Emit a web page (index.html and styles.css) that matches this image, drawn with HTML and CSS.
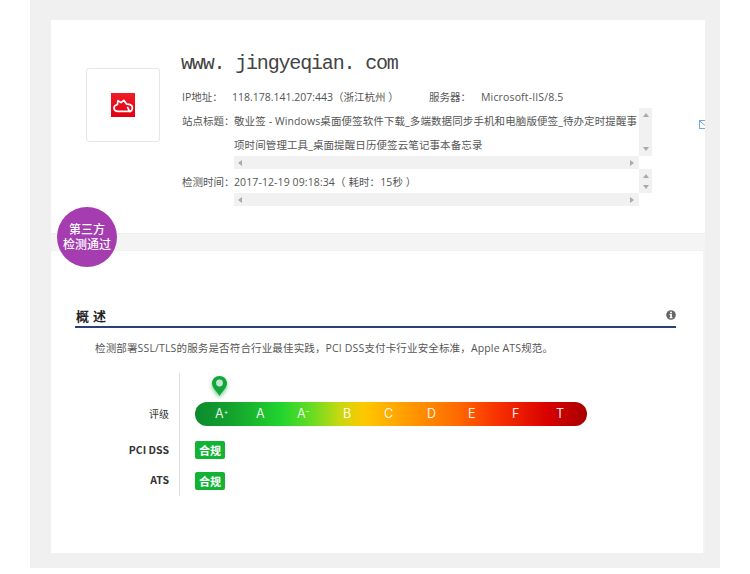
FILE: index.html
```html
<!DOCTYPE html>
<html lang="zh-CN">
<head>
    <meta charset="UTF-8">
    <meta name="viewport" content="width=device-width, initial-scale=1.0">
    <title>www.jingyeqian.com 检测报告</title>
    <link rel="stylesheet" href="styles.css">
</head>
<body>
    <div class="report">
        <div class="report-inner">
            <div class="site-card">
                <div class="site-logo">
                    <svg class="logo-mark" width="24" height="24" viewBox="0 0 24 24">
                        <path d="M7 18.3C4.6 18.3 3 16.8 3 15C3 13.2 4.4 12 6.4 11.5L7 7.6L10 9.6L12.8 7.4L15.8 11.2C19 11.2 21.4 12.6 21.4 15C21.4 16.8 20.4 18 18.8 18.6L16.3 13.8M7 18.3H18.8" fill="none" stroke="#fff" stroke-width="1.7" stroke-linejoin="round"/>
                    </svg>
                </div>
                <div class="site-info">
                    <h1 class="site-name">www. jingyeqian. com</h1>
                    <div class="ip-row">
                        <span class="ip-label">IP地址：</span>
                        <span class="ip-value">118.178.141.207:443（浙江杭州 ）</span>
                        <span class="server-label">服务器：</span>
                        <span class="server-value">Microsoft-IIS/8.5</span>
                    </div>
                    <div class="info-row">
                        <span class="info-label">站点标题：</span>
                        <div class="scrollbox">
                            <div class="scroll-text tall">
                                <div class="scroll-line">敬业签 - Windows桌面便签软件下载_多端数据同步手机和电脑版便签_待办定时提醒事</div>
                                <div class="scroll-line">项时间管理工具_桌面提醒日历便签云笔记事本备忘录</div>
                            </div>
                            <div class="scroll-v"><i class="arrow-up"></i><i class="arrow-down"></i></div>
                            <div class="scroll-h"><i class="arrow-left"></i><i class="arrow-right"></i></div>
                        </div>
                    </div>
                    <div class="info-row">
                        <span class="info-label">检测时间：</span>
                        <div class="scrollbox">
                            <div class="scroll-text">
                                <div class="scroll-line">2017-12-19 09:18:34（ 耗时：15秒 ）</div>
                            </div>
                            <div class="scroll-v short"><i class="arrow-up"></i><i class="arrow-down"></i></div>
                            <div class="scroll-h"><i class="arrow-left"></i><i class="arrow-right"></i></div>
                        </div>
                    </div>
                </div>
                <svg class="mail-icon" width="11" height="9" viewBox="0 0 11 9">
                    <rect x="0.5" y="0.5" width="10" height="8" fill="none" stroke="#6ea8dc"/>
                    <path d="M0.5 1L5.5 5L10.5 1" fill="none" stroke="#6ea8dc"/>
                </svg>
            </div>

            <div class="stamp">第三方<br>检测通过</div>

            <div class="divider"></div>

            <div class="summary-card">
                <div class="section-head">
                    <h2>概 述</h2>
                    <svg width="10" height="10" viewBox="0 0 10 10">
                        <circle cx="5" cy="5" r="4.8" fill="#666"/>
                        <rect x="4.1" y="1.7" width="1.8" height="1.6" fill="#fff"/>
                        <path d="M3.5 4H5.9V7.2H6.6V8.2H3.5V7.2H4.2V5H3.5Z" fill="#fff"/>
                    </svg>
                </div>
                <p class="summary-text">检测部署SSL/TLS的服务是否符合行业最佳实践，PCI DSS支付卡行业安全标准，Apple ATS规范。</p>

                <div class="rating-table">
                    <div class="rating-label grade-label">评级</div>
                    <div class="rating-cell grade-cell">
                        <svg class="pin" width="15" height="20" viewBox="0 0 15 20">
                            <path d="M7.5 0C3.4 0 0 3.2 0 7.3C0 12 5 15.5 7.5 20C10 15.5 15 12 15 7.3C15 3.2 11.6 0 7.5 0Z" fill="#12a53c"/>
                            <circle cx="7.5" cy="7" r="3.4" fill="#c6e6cf"/>
                        </svg>
                        <div class="grade-bar">
                            <span>A<sup>+</sup></span>
                            <span>A</span>
                            <span>A<sup>–</sup></span>
                            <span>B</span>
                            <span>C</span>
                            <span>D</span>
                            <span>E</span>
                            <span>F</span>
                            <span>T</span>
                        </div>
                    </div>
                    <div class="rating-label bold">PCI DSS</div>
                    <div class="rating-cell badge-cell"><span class="badge">合规</span></div>
                    <div class="rating-label bold">ATS</div>
                    <div class="rating-cell badge-cell last"><span class="badge">合规</span></div>
                </div>
            </div>
        </div>
    </div>
</body>
</html>
```

FILE: styles.css
```css
body {
    margin: 0;
    padding: 0;
    background-color: #fff;
    font-family: "Open Sans", "Noto Sans CJK SC", sans-serif;
    font-size: 10.5px;
    color: #555;
}
.report {
    width: 690px;
    height: 568px;
    margin-left: 30px;
    padding: 20px 0 15px 21px;
    box-sizing: border-box;
    background-color: #f0f0f0;
}
.report-inner {
    position: relative;
    width: 654px;
    background-color: #f4f4f4;
}

/* top card */
.site-card {
    position: relative;
    display: flex;
    height: 213px;
    padding-left: 35px;
    box-sizing: border-box;
    background-color: #fff;
    overflow: hidden;
}
.site-logo {
    display: flex;
    justify-content: center;
    align-items: center;
    flex: none;
    width: 74px;
    height: 74px;
    margin-top: 48px;
    box-sizing: border-box;
    border: 1px solid #e6e6e6;
    border-radius: 3px;
}
.logo-mark {
    background: linear-gradient(#f01c28, #e00012);
}
.site-info {
    margin-left: 22px;
    padding-top: 32px;
}
.site-name {
    margin: 0 0 13px -1px;
    font-family: "Liberation Mono", monospace;
    font-size: 20px;
    font-weight: normal;
    line-height: 24px;
    letter-spacing: -1.17px;
    white-space: nowrap;
    color: #444;
}
.ip-row {
    display: flex;
    height: 16px;
    margin-bottom: 3px;
    line-height: 16px;
    white-space: nowrap;
}
.ip-label {
    width: 50px;
}
.ip-value {
    width: 197px;
}
.server-label {
    width: 52px;
}
.server-value {
    letter-spacing: 0.15px;
}
.info-row {
    display: flex;
}
.info-label {
    flex: none;
    width: 52px;
    padding-top: 1px;
    line-height: 24px;
    white-space: nowrap;
}
.scrollbox {
    display: grid;
    grid-template-columns: 405px 13px;
    grid-template-rows: auto 13px;
}
.scroll-text {
    height: 24px;
    overflow: hidden;
}
.scroll-text.tall {
    height: 48px;
}
.scroll-line {
    padding-top: 1px;
    height: 23px;
    line-height: 24px;
    letter-spacing: 0.1px;
    white-space: nowrap;
}
.scroll-v {
    display: flex;
    flex-direction: column;
    justify-content: space-between;
    align-items: center;
    padding: 5px 0;
    box-sizing: border-box;
    background-color: #f1f1f1;
}
.scroll-v.short {
    padding: 5px 0 4px;
}
.scroll-h {
    display: flex;
    justify-content: space-between;
    align-items: center;
    padding: 0 5px 0 4px;
    background-color: #f1f1f1;
}
.arrow-up,
.arrow-down {
    width: 0;
    height: 0;
    border-left: 3.5px solid transparent;
    border-right: 3.5px solid transparent;
}
.arrow-up {
    border-bottom: 4px solid #aaa;
}
.arrow-down {
    border-top: 4px solid #aaa;
}
.arrow-left,
.arrow-right {
    width: 0;
    height: 0;
    border-top: 3.5px solid transparent;
    border-bottom: 3.5px solid transparent;
}
.arrow-left {
    border-right: 4px solid #aaa;
}
.arrow-right {
    border-left: 4px solid #aaa;
}
.mail-icon {
    position: absolute;
    top: 100px;
    right: -5px;
}

/* round stamp over the two cards */
.stamp {
    position: absolute;
    top: 187px;
    left: 6px;
    width: 60px;
    height: 60px;
    border-radius: 50%;
    background-color: #a53cb0;
    color: #fff;
    font-family: "Noto Sans CJK SC", sans-serif;
    font-size: 12px;
    font-weight: 500;
    line-height: 15px;
    text-align: center;
    padding-top: 14px;
    box-sizing: border-box;
}
.divider {
    height: 18px;
    box-sizing: border-box;
    border-top: 1px solid #eee;
    border-bottom: 1px solid #f0f0f0;
}

/* bottom card */
.summary-card {
    width: 652px;
    height: 302px;
    padding: 54px 27px 0 24px;
    box-sizing: border-box;
    background-color: #fff;
}
.section-head {
    display: flex;
    justify-content: space-between;
    align-items: center;
    height: 21px;
    padding: 0 0 0 1px;
    border-bottom: 2px solid #2b3f7c;
}
.section-head h2 {
    margin: -1px 0 0;
    font-family: "Noto Sans CJK SC", sans-serif;
    font-size: 13px;
    font-weight: bold;
    line-height: 21px;
    letter-spacing: 0.5px;
    color: #222;
}
.section-head svg {
    margin-bottom: 1px;
}
.summary-text {
    margin: 12px 0 17px 20px;
    line-height: 16px;
    letter-spacing: 0.15px;
    white-space: nowrap;
}
.rating-table {
    display: grid;
    grid-template-columns: 79px 1fr;
    margin-left: 25px;
}
.rating-label {
    display: flex;
    justify-content: flex-end;
    align-items: center;
    padding-right: 10px;
    color: #333;
    font-size: 10px;
}
.rating-label.bold {
    padding-bottom: 2px;
    font-family: "Noto Sans CJK SC", sans-serif;
    font-size: 10.5px;
    font-weight: bold;
}
.grade-label {
    align-items: flex-end;
    padding-bottom: 14px;
    line-height: 14px;
}
.rating-cell {
    padding-left: 15px;
    border-left: 1px solid #ddd;
}
.grade-cell {
    height: 62px;
    padding-top: 3px;
    box-sizing: border-box;
}
.pin {
    display: block;
    margin: 0 0 6px 17px;
    filter: drop-shadow(0 2px 2px rgba(18, 165, 60, 0.6));
}
.grade-bar {
    display: grid;
    grid-template-columns: 41px 41px 46px 41px 43px 41px 44px 44px 1fr;
    align-items: center;
    width: 392px;
    height: 24px;
    padding-left: 20px;
    box-sizing: border-box;
    border-radius: 12px;
    background: linear-gradient(to right, #0c8a2e 0%, #14a52e 10%, #22d42e 22%, #5edc22 29%, #c8d810 37%, #ffc800 43%, #ff9c00 54%, #ff6a00 67%, #f83200 77%, #d80000 90%, #a80000 100%);
    color: rgba(255, 255, 255, 0.92);
    font-family: Inter, "Liberation Sans", sans-serif;
    font-size: 12.5px;
    line-height: 24px;
}
.grade-bar sup {
    font-size: 7px;
    line-height: 0;
    vertical-align: 4px;
}
.badge-cell {
    display: flex;
    align-items: center;
    height: 30px;
}
.badge-cell.last {
    height: 31px;
}
.badge {
    width: 30px;
    height: 18px;
    border-radius: 2px;
    background-color: #12b335;
    color: #fff;
    font-family: "Noto Sans CJK SC", sans-serif;
    font-size: 11px;
    font-weight: bold;
    line-height: 18px;
    text-align: center;
}
```
